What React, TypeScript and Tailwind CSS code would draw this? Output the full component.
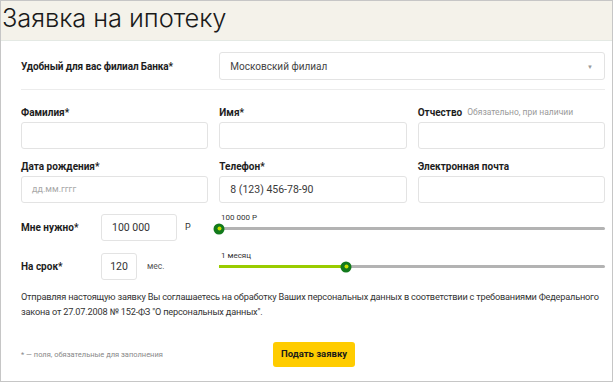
import React from "react";

function Field({ label, hint, value, placeholder }: { label: string; hint?: string; value?: string; placeholder?: string }) {
  return (
    <div>
      <div className="flex h-[14px] items-center gap-[5px]">
        <span className="text-[10px] font-bold text-[#1d1d1d]">{label}</span>
        {hint && <span className="text-[8.5px] text-[#9a9a9a]">{hint}</span>}
      </div>
      <div className="mt-[3px] flex h-[27px] items-center rounded-[3px] border border-[#e3e3e3] px-[10px]">
        {value && <span className="text-[10.5px] text-[#3a3a3a]">{value}</span>}
        {placeholder && <span className="text-[9px] text-[#a8a8a8]">{placeholder}</span>}
      </div>
    </div>
  );
}

function Slider({ caption, percent, filled }: { caption: string; percent: number; filled?: boolean }) {
  return (
    <div className="flex-1">
      <div className="h-[10px] pl-[2px] text-[8px] leading-[10px] text-[#333]">{caption}</div>
      <div className="relative mt-[4px] h-[3px] rounded-full bg-[#b3b3b3]">
        {filled && (
          <div className="absolute left-0 top-0 h-[3px] bg-[#99cc00]" style={{ width: `${percent}%` }} />
        )}
        <div
          className="absolute top-1/2 flex h-[11px] w-[11px] -translate-x-1/2 -translate-y-1/2 items-center justify-center rounded-full bg-[#127a1c]"
          style={{ left: `${percent}%` }}
        >
          <div className="h-[4px] w-[4px] rounded-full bg-[#c6e000]" />
        </div>
      </div>
    </div>
  );
}

export default function App() {
  return (
    <div className="h-[382px] w-[613px] overflow-hidden border border-[#c6c6c6] bg-white font-['Roboto',sans-serif] text-[#222]">
      <div className="h-[40px] border-b border-[#e4e9e4] bg-[#f4f2ea]">
        <h1 className="pl-[1px] font-['Inter',sans-serif] text-[25.5px] font-light leading-[34px] tracking-[-0.1px] text-[#1a1a1a]">
          Заявка на ипотеку
        </h1>
      </div>

      <div className="pl-5 pr-[7px]">
        <div className="grid grid-cols-3 items-center gap-x-[11px] border-b border-[#ececec] pb-[9px] pt-[11px]">
          <span className="text-[10px] font-bold tracking-[-0.1px] text-[#1d1d1d]">Удобный для вас филиал Банка*</span>
          <div className="col-span-2 flex h-[28px] items-center justify-between rounded-[3px] border border-[#e3e3e3] pl-[10px] pr-[11px]">
            <span className="text-[10px] text-[#444]">Московский филиал</span>
            <span className="text-[6px] text-[#999]">▼</span>
          </div>
        </div>

        <div className="grid grid-cols-3 gap-x-[11px] gap-y-[10px] pt-[15px]">
          <Field label="Фамилия*" />
          <Field label="Имя*" />
          <Field label="Отчество" hint="Обязательно, при наличии" />
          <Field label="Дата рождения*" placeholder="дд.мм.гггг" />
          <Field label="Телефон*" value="8 (123) 456-78-90" />
          <Field label="Электронная почта" />
        </div>

        <div className="mt-[11px] flex items-start">
          <div className="flex w-[198px] items-center">
            <span className="w-[80px] text-[10px] font-bold text-[#1d1d1d]">Мне нужно*</span>
            <div className="flex h-[27px] w-[76px] items-center rounded-[3px] border border-[#e3e3e3] px-[10px] text-[10.5px] text-[#333]">
              100 000
            </div>
            <span className="ml-[8px] text-[9px] text-[#333]">Р</span>
          </div>
          <div className="-mt-[1px] flex flex-1">
            <Slider caption="100 000 Р" percent={0} />
          </div>
        </div>

        <div className="mt-[12px] flex items-start">
          <div className="flex w-[198px] items-center">
            <span className="w-[80px] text-[10px] font-bold text-[#1d1d1d]">На срок*</span>
            <div className="flex h-[27px] w-[36px] items-center justify-center rounded-[3px] border border-[#e3e3e3] text-[10.5px] text-[#333]">
              120
            </div>
            <span className="ml-[10px] text-[8.5px] text-[#555]">мес.</span>
          </div>
          <div className="-mt-[2px] flex flex-1">
            <Slider caption="1 месяц" percent={33} filled />
          </div>
        </div>

        <p className="mt-[9px] pr-[4px] text-[9.2px] leading-[15px] tracking-[-0.2px] text-[#333]">
          Отправляя настоящую заявку Вы соглашаетесь на обработку Ваших персональных данных в соответствии с требованиями Федерального закона от 27.07.2008 № 152-ФЗ "О персональных данных".
        </p>

        <div className="mt-[23px] flex items-center">
          <span className="w-[252px] text-[7.5px] text-[#888]">* — поля, обязательные для заполнения</span>
          <button className="flex h-[25px] w-[82px] items-center justify-center rounded-[3px] bg-[#ffcc00] text-[9.5px] font-bold text-[#1a1a1a]">
            Подать заявку
          </button>
        </div>
      </div>
    </div>
  );
}
